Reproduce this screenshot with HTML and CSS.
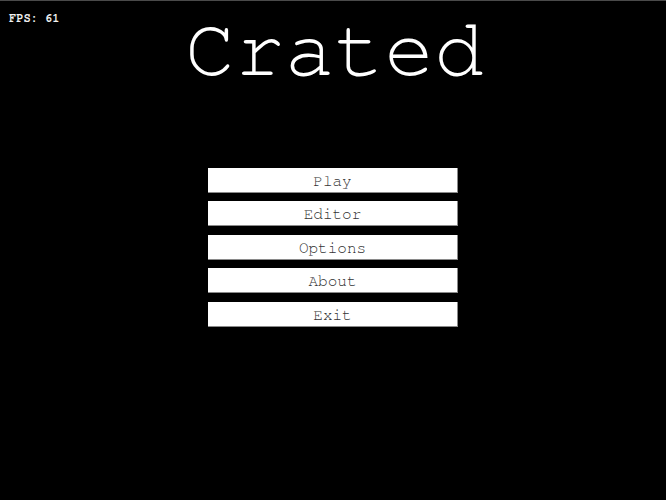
FILE: index.html
```html
<!DOCTYPE html>
<html>
<head>
<meta charset="utf-8">
<link rel="stylesheet" href="styles.css">
</head>
<body>
<div class="screen">
  <div class="fps">FPS: 61</div>
  <h1 class="title">Crated</h1>
  <nav class="menu">
    <div class="btn">Play</div>
    <div class="btn">Editor</div>
    <div class="btn">Options</div>
    <div class="btn">About</div>
    <div class="btn">Exit</div>
  </nav>
</div>
</body>
</html>
```
FILE: styles.css
```css
html, body {
  margin: 0;
  padding: 0;
  background: #000;
}
.screen {
  position: relative;
  width: 666px;
  height: 499px;
  border-top: 1px solid #4a4a4a;
  background: #000;
  font-family: "FreeMono", "Nimbus Mono PS", "Courier New", "Liberation Mono", monospace;
  display: flex;
  flex-direction: column;
  align-items: center;
}
.fps {
  position: absolute;
  left: 9px;
  top: 10px;
  color: #f2f2f2;
  font-weight: bold;
  font-size: 12px;
  line-height: 14px;
}
.title {
  margin: 5px 0 0 3px;
  color: #fff;
  font-weight: normal;
  font-size: 83px;
  line-height: 90px;
}
.menu {
  margin-top: 72px;
  display: flex;
  flex-direction: column;
  gap: 8.4px;
}
.btn {
  box-sizing: border-box;
  width: 250px;
  height: 25px;
  padding-top: 1px;
  background: #fff;
  border-right: 1px solid #8a8a8a;
  border-bottom: 1px solid #8a8a8a;
  color: #333;
  font-size: 16px;
  line-height: 24px;
  text-align: center;
}
```
